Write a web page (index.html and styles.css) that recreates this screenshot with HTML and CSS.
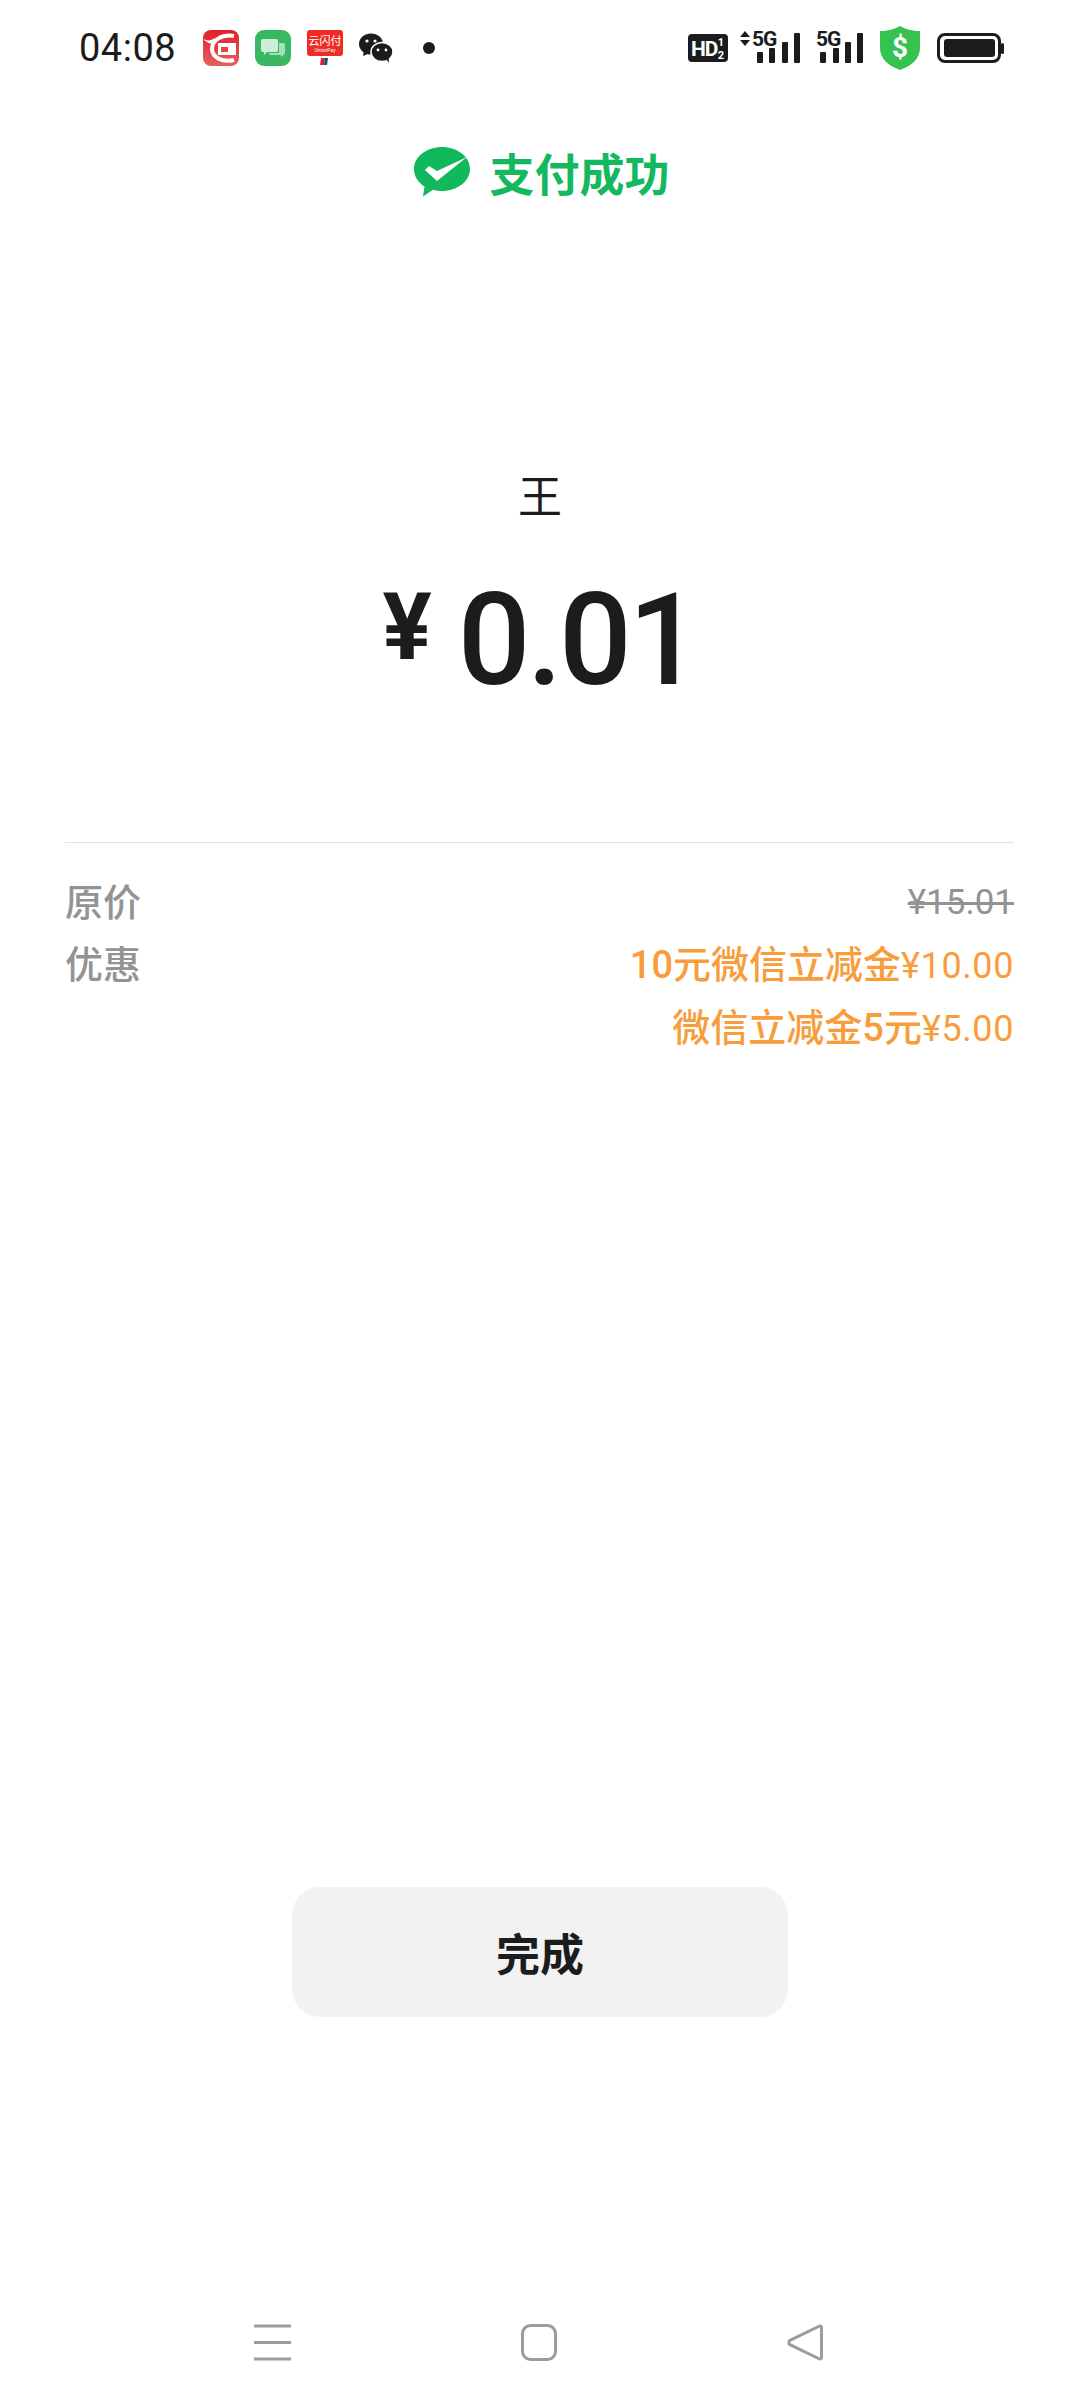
FILE: index.html
```html
<!DOCTYPE html>
<html lang="zh-CN">
<head>
    <meta charset="UTF-8">
    <meta name="viewport" content="width=device-width, initial-scale=1.0">
    <title>支付成功</title>
    <link rel="stylesheet" href="styles.css">
</head>
<body>
    <div class="status-bar">
        <span class="time">04:08</span>
        <div class="app-icons">
            <svg width="36" height="36" viewBox="0 0 36 36">
                <defs>
                    <linearGradient id="red-app" x1="0" y1="0" x2="0" y2="1">
                        <stop offset="0" stop-color="#e0202c"/>
                        <stop offset="1" stop-color="#e8605f"/>
                    </linearGradient>
                </defs>
                <rect width="36" height="36" rx="8" fill="url(#red-app)"/>
                <path d="M31 6C19 4 9 10 9 19c0 8 10 14 22 11" fill="none" stroke="#fff" stroke-width="4"/>
                <path d="M0 9c4 2 8 2 12-1l-1 6C7 14 3 12 0 9z" fill="#fff"/>
                <path d="M33 13H15v12h18zM25 17h-7v5h7z" fill="#fff" fill-rule="evenodd"/>
            </svg>
            <svg width="36" height="36" viewBox="0 0 36 36">
                <rect width="36" height="36" rx="9" fill="#38b862"/>
                <path d="M8 9h13a2 2 0 0 1 2 2v9a2 2 0 0 1-2 2h-9l-3 3v-3H8a2 2 0 0 1-2-2v-9a2 2 0 0 1 2-2z" fill="#cfeeda"/>
                <path d="M24 13h4a2 2 0 0 1 2 2v8a2 2 0 0 1-2 2v2l-3-2h-9a2 2 0 0 1-2-2h9a1 1 0 0 0 1-1z" fill="#a5e0ba"/>
            </svg>
            <svg width="36" height="36" viewBox="0 0 36 36">
                <path d="M3 0h30a3 3 0 0 1 3 3v20a3 3 0 0 1-3 3H3a3 3 0 0 1-3-3V3a3 3 0 0 1 3-3z" fill="#ee2b24"/>
                <text x="18" y="15" class="union-cn" text-anchor="middle">云闪付</text>
                <text x="18" y="22" class="union-en" text-anchor="middle">UnionPay</text>
                <path d="M14 28h4l-1 7h-4z" fill="#d8232a"/>
                <path d="M18 28h3l-1 7h-3z" fill="#0b4f8a"/>
            </svg>
            <svg width="34" height="30" viewBox="0 0 34 30">
                <ellipse cx="12" cy="11" rx="12" ry="10.5" fill="#1c1c1c"/>
                <path d="M5 17l-1 6 7-3z" fill="#1c1c1c"/>
                <ellipse cx="23" cy="19" rx="11" ry="9.5" fill="#1c1c1c" stroke="#fff" stroke-width="1.5"/>
                <path d="M27 26l3 4-.5-6z" fill="#1c1c1c"/>
                <circle cx="8" cy="8" r="1.6" fill="#fff"/>
                <circle cx="16" cy="8" r="1.6" fill="#fff"/>
                <circle cx="19" cy="17" r="1.4" fill="#fff"/>
                <circle cx="27" cy="17" r="1.4" fill="#fff"/>
            </svg>
            <span class="dot"></span>
        </div>
        <div class="sys-icons">
            <div class="signals">
                <svg class="hd-badge" width="40" height="28" viewBox="0 0 40 28">
                    <rect width="40" height="28" rx="4" fill="#1c1c1c"/>
                    <text x="3" y="22" class="hd">HD</text>
                    <text x="33" y="12" class="hd-small" text-anchor="middle">1</text>
                    <text x="33" y="25" class="hd-small" text-anchor="middle">2</text>
                </svg>
                <svg width="60" height="50" viewBox="0 -8 60 50">
                    <path d="M5 0l5 6H0zM5 15l5-6H0z" fill="#1c1c1c"/>
                    <text x="12" y="15" class="net">5G</text>
                    <rect x="17" y="21" width="6" height="11" rx="1" fill="#1c1c1c"/>
                    <rect x="29" y="17" width="6" height="15" rx="1" fill="#1c1c1c"/>
                    <rect x="42" y="11" width="6" height="21" rx="1" fill="#1c1c1c"/>
                    <rect x="54" y="2" width="6" height="30" rx="1" fill="#1c1c1c"/>
                </svg>
                <svg width="48" height="50" viewBox="0 -8 48 50">
                    <text x="1" y="15" class="net">5G</text>
                    <rect x="5" y="21" width="6" height="11" rx="1" fill="#1c1c1c"/>
                    <rect x="18" y="17" width="6" height="15" rx="1" fill="#1c1c1c"/>
                    <rect x="30" y="11" width="6" height="21" rx="1" fill="#1c1c1c"/>
                    <rect x="42" y="2" width="6" height="30" rx="1" fill="#1c1c1c"/>
                </svg>
            </div>
            <svg width="40" height="44" viewBox="0 0 40 44">
                <path d="M20 0c5 3 12 5 20 5v17c0 11-9 18-20 22C9 40 0 33 0 22V5c8 0 15-2 20-5z" fill="#35c24f"/>
                <text x="20" y="31" class="dollar" text-anchor="middle">$</text>
            </svg>
            <svg width="67" height="30" viewBox="0 0 67 30">
                <rect x="1.500" y="1.500" width="61" height="27" rx="6.500" fill="none" stroke="#1c1c1c" stroke-width="3"/>
                <rect x="7" y="6" width="51" height="18" rx="3" fill="#1c1c1c"/>
                <rect x="64" y="10" width="3" height="11" rx="1.500" fill="#1c1c1c"/>
            </svg>
        </div>
    </div>

    <div class="result-title">
        <svg width="56" height="50" viewBox="0 0 56 50">
            <path d="M28 0c15 0 28 9.500 28 22S43 44 28 44c-3 0-6-.4-9-1.200L9 49.500l1.500-10C4 35.500 0 29.200 0 22 0 9.500 13 0 28 0z" fill="#12b85c"/>
            <path d="M11 23l4-4 8 5 30-14-30 24z" fill="#fff"/>
        </svg>
        <span>支付成功</span>
    </div>

    <div class="payee">王</div>
    <div class="amount"><span class="currency">¥</span><span class="number">0.01</span></div>

    <div class="details">
        <div class="detail-row">
            <span class="detail-label">原价</span>
            <div class="detail-value"><s class="original">¥15.01</s></div>
        </div>
        <div class="detail-row">
            <span class="detail-label">优惠</span>
            <div class="detail-value discount">
                <div>10元微信立减金<span class="price">¥10.00</span></div>
                <div>微信立减金5元<span class="price">¥5.00</span></div>
            </div>
        </div>
    </div>

    <button class="done-btn" type="button">完成</button>

    <div class="nav-bar">
        <svg width="37" height="37" viewBox="0 0 37 37">
            <path d="M0 2h37M0 18.500h37M0 35h37" fill="none" stroke="#9c9c9c" stroke-width="3"/>
        </svg>
        <svg width="36" height="37" viewBox="0 0 36 37">
            <rect x="1.500" y="1.500" width="33" height="34" rx="8" fill="none" stroke="#9c9c9c" stroke-width="3"/>
        </svg>
        <svg width="36" height="37" viewBox="0 0 36 37">
            <path d="M33 2c1 0 1.500 .7 1.500 1.700v29.600c0 1-.5 1.700-1.500 1.700-.5 0-1-.2-1.500-.5L3 20.700c-1.600-1-1.600-3.400 0-4.400L31.500 2.500c.5-.3 1-.5 1.500-.5z" fill="none" stroke="#9c9c9c" stroke-width="3"/>
        </svg>
    </div>
</body>
</html>
```

FILE: styles.css
```css
body {
    margin: 0;
    height: 2408px;
    display: flex;
    flex-direction: column;
    background: #fff;
    color: #1c1c1c;
    font-family: Roboto, "Noto Sans CJK SC", sans-serif;
}
.status-bar {
    height: 96px;
    display: flex;
    align-items: center;
    padding: 0 76px 0 79px;
}
.time {
    font-size: 38px;
    letter-spacing: 0.5px;
    width: 124px;
}
.app-icons {
    display: flex;
    align-items: center;
    gap: 16px;
}
.dot {
    width: 12px;
    height: 12px;
    margin-left: 14px;
    border-radius: 50%;
    background: #1c1c1c;
}
.sys-icons {
    display: flex;
    align-items: center;
    gap: 17px;
    margin-left: auto;
}
.signals {
    display: flex;
    align-items: center;
    gap: 15px;
}
.hd-badge {
    margin-right: -3px;
}
.union-cn {
    font-size: 11px;
    fill: #fff;
}
.union-en {
    font-size: 5px;
    fill: #fff;
}
.hd {
    font-size: 21px;
    font-weight: 700;
    letter-spacing: -1px;
    fill: #fff;
}
.hd-small {
    font-size: 11px;
    font-weight: 700;
    fill: #fff;
}
.net {
    font-size: 21px;
    font-weight: 700;
    letter-spacing: -1px;
    fill: #1c1c1c;
}
.dollar {
    font-size: 28px;
    font-weight: 700;
    fill: #fff;
}
.result-title {
    height: 60px;
    margin-top: 46px;
    padding-left: 4px;
    display: flex;
    align-items: center;
    justify-content: center;
    gap: 19px;
    font-size: 45px;
    font-weight: 700;
    color: #14b85f;
}
.payee {
    margin-top: 266px;
    text-align: center;
    font-size: 44px;
    line-height: 60px;
}
.amount {
    margin-top: 37px;
    display: flex;
    align-items: center;
    justify-content: center;
    font-size: 128px;
    font-weight: 500;
    line-height: 150px;
}
.number {
    letter-spacing: -3.5px;
}
.currency {
    font-size: 92px;
    font-weight: 700;
    margin: -24px 26px 0 0;
}
.details {
    margin: 127px 66px 0 65px;
    padding-top: 29px;
    border-top: 1px solid #e2e2e2;
    font-size: 38px;
    font-weight: 500;
    line-height: 62px;
}
.detail-row {
    display: flex;
    justify-content: space-between;
}
.detail-label {
    color: #939393;
}
.detail-value {
    text-align: right;
}
.original {
    color: #939393;
    font-size: 35px;
    font-weight: 400;
    vertical-align: 2px;
}
.discount {
    color: #f79d3c;
}
.price {
    font-size: 36px;
    font-weight: 400;
    letter-spacing: 0.6px;
}
.done-btn {
    display: block;
    width: 496px;
    height: 130px;
    margin: 827px auto 0;
    border: none;
    border-radius: 28px;
    background: #f2f2f2;
    color: #1c1c1c;
    font-family: inherit;
    font-size: 44px;
    font-weight: 700;
}
.nav-bar {
    height: 132px;
    margin-top: auto;
    display: flex;
    align-items: center;
    justify-content: space-between;
    padding: 0 257px 0 254px;
}
```
